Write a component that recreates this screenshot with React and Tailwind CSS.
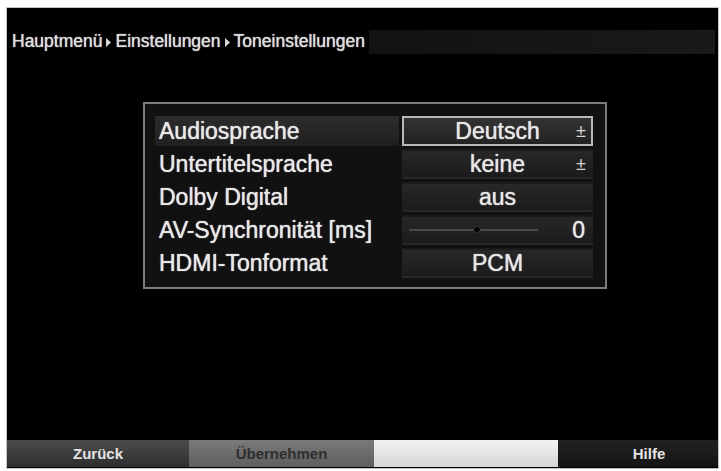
import React from 'react'

const rows = [
  { label: 'Audiosprache', value: 'Deutsch', kind: 'select', active: true },
  { label: 'Untertitelsprache', value: 'keine', kind: 'select' },
  { label: 'Dolby Digital', value: 'aus', kind: 'plain' },
  { label: 'AV-Synchronität [ms]', value: '0', kind: 'slider' },
  { label: 'HDMI-Tonformat', value: 'PCM', kind: 'plain' },
]

function Arrow() {
  return (
    <svg width="5" height="9" viewBox="0 0 5 9" className="mx-[4px] shrink-0">
      <path d="M0 0 L5 4.5 L0 9 Z" fill="#d8d8d8" />
    </svg>
  )
}

function ValueBox({ row }) {
  const frame = row.active
    ? 'border-2 border-[#b8b8b8] bg-gradient-to-b from-[#333] to-[#222]'
    : 'border-2 border-transparent bg-gradient-to-b from-[#282828] to-[#1b1b1b]'

  if (row.kind === 'slider') {
    return (
      <div className={`w-[191px] h-full flex items-center pl-[5px] pr-[6px] ${frame}`}>
        <div className="relative w-[129px] h-[2px] bg-[#4a4a4a]">
          <div className="absolute left-[64px] top-[-3px] w-[8px] h-[7px] rounded-full bg-[#050505] border border-[#3a3a3a]" />
        </div>
        <span className="ml-auto text-[23px] leading-none text-[#e6e6e6] [text-shadow:0_0_1px_#fff]">{row.value}</span>
      </div>
    )
  }

  return (
    <div className={`relative w-[191px] h-full flex items-center justify-center ${frame}`}>
      <span className="text-[23px] leading-none text-[#e6e6e6] [text-shadow:0_0_1px_#fff]">{row.value}</span>
      {row.kind === 'select' && (
        <span className="absolute right-[5px] top-[4px] text-[18px] leading-none text-[#d4d4d4]">±</span>
      )}
    </div>
  )
}

export default function App() {
  return (
    <div
      className="w-[721px] h-[471px] bg-white pt-[7px] pl-[6px]"
      style={{ fontFamily: '"Liberation Sans", Arial, sans-serif' }}
    >
      <div className="w-[713px] h-[462px] border border-[#c4c4c4] bg-black flex flex-col">
        {/* breadcrumb */}
        <div className="mt-[22px] h-[24px] flex items-center pl-[5px] pr-[3px]">
          <div className="flex items-center text-[17.5px] leading-none text-[#dcdcdc] whitespace-nowrap [text-shadow:0_0_1px_#fff]">
            <span>Hauptmenü</span>
            <Arrow />
            <span>Einstellungen</span>
            <Arrow />
            <span>Toneinstellungen</span>
          </div>
          <div className="flex-1 h-full ml-[4px] bg-gradient-to-r from-[#121212] to-[#191919]" />
        </div>

        {/* settings panel */}
        <div className="mt-[48px] ml-[136px] w-[464px] border-2 border-[#7c7c7c] bg-[#111] pt-[12px] pb-[9px] pl-[10px] pr-[12px] flex flex-col gap-[3px]">
          {rows.map((row) => (
            <div key={row.label} className="h-[30px] flex items-center">
              <div
                className={`flex-1 h-full flex items-center pl-[4px] mr-[3px] ${
                  row.active ? 'bg-gradient-to-b from-[#2c2c2c] to-[#1f1f1f]' : ''
                }`}
              >
                <span className="text-[23px] leading-none text-[#e8e8e8] [text-shadow:0_0_1px_#fff]">{row.label}</span>
              </div>
              <ValueBox row={row} />
            </div>
          ))}
        </div>

        {/* colour key bar */}
        <div className="mt-auto mb-[1px] h-[27px] flex text-[15px] font-bold leading-none">
          <div className="w-[182px] flex items-center justify-center bg-gradient-to-b from-[#4c4c4c] to-[#2e2e2e] text-[#e4e4e4]">
            Zurück
          </div>
          <div className="w-[185px] flex items-center justify-center bg-gradient-to-b from-[#7a7a7a] to-[#5e5e5e] text-[#2e2e2e]">
            Übernehmen
          </div>
          <div className="w-[184px] bg-gradient-to-b from-[#f2f2f2] to-[#d6d6d6]" />
          <div className="flex-1 flex items-center justify-center pl-[22px] bg-gradient-to-b from-[#222] to-[#141414] text-[#e4e4e4]">
            Hilfe
          </div>
        </div>
      </div>
    </div>
  )
}
